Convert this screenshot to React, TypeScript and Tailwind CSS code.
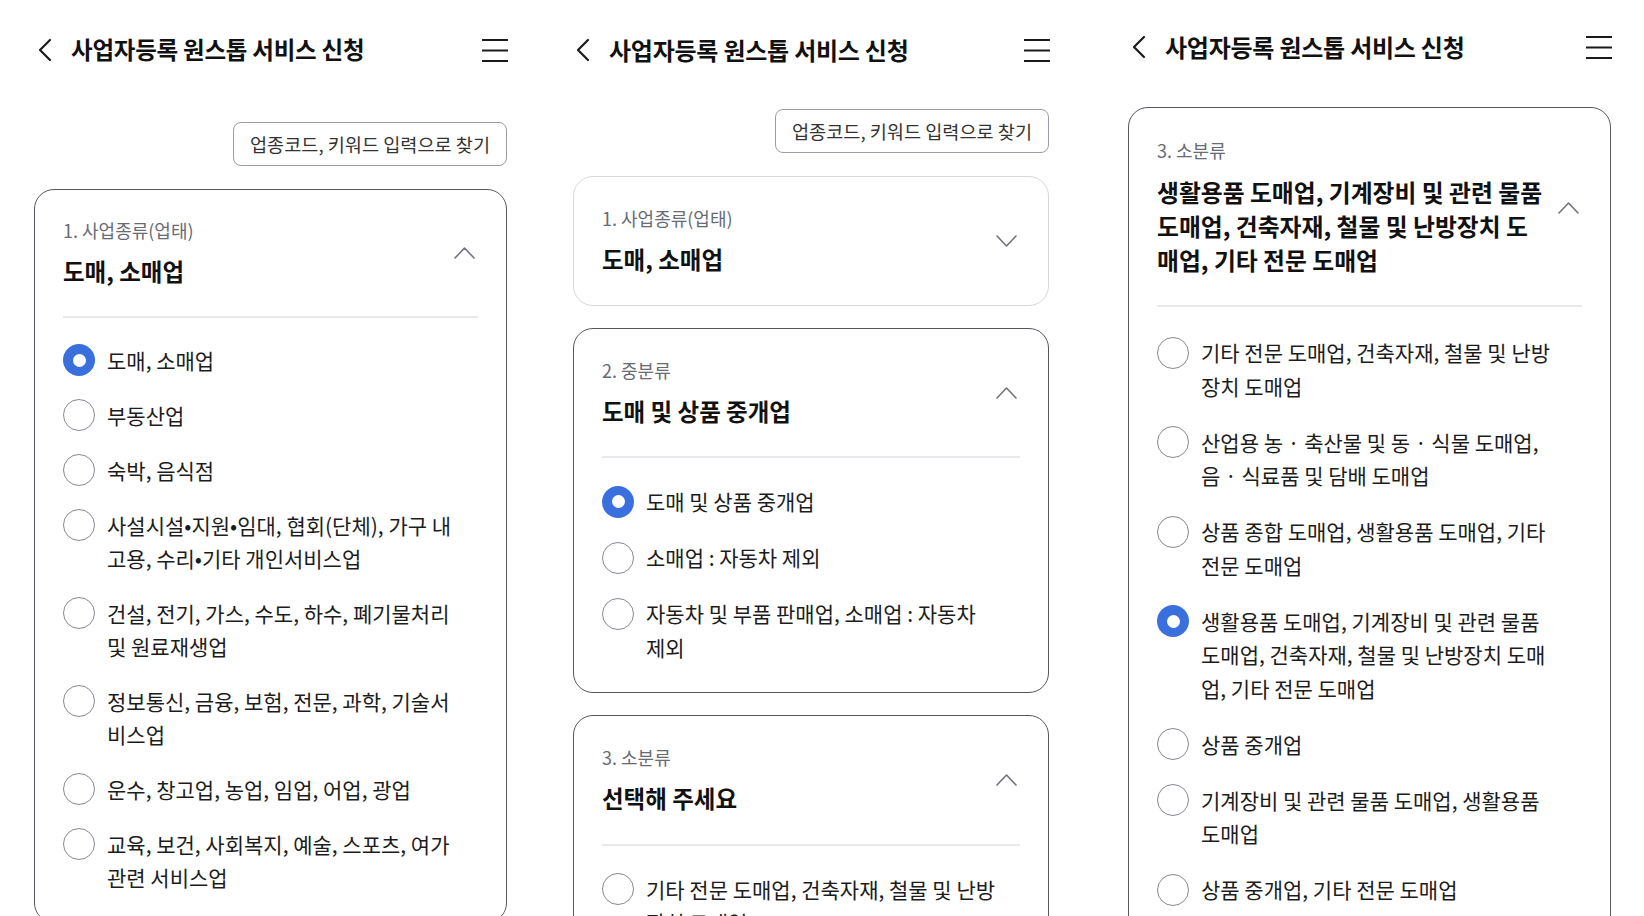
type Option = { lines: string[]; selected?: boolean }

type Variant = 'a' | 'b' | 'c'

interface CardProps {
  label: string
  title: string[]
  open?: boolean
  options?: Option[]
  variant?: Variant
}

// the three captures were taken at slightly different zoom levels
const spacing: Record<Variant, { box: string; title: string; rule: string; list: string; line: string }> = {
  a: {
    box: 'pt-[28px] pb-[28px]',
    title: 'text-[23.5px] leading-[33.5px]',
    rule: 'mt-[27px]',
    list: 'mt-[26px] gap-[22px]',
    line: 'leading-[33px]',
  },
  b: {
    box: 'pt-[29px] pb-[28px]',
    title: 'text-[23.5px] leading-[33.5px]',
    rule: 'mt-[28px]',
    list: 'mt-[27px] gap-[22.5px]',
    line: 'leading-[33.5px]',
  },
  c: {
    box: 'pt-[30px] pb-[30px]',
    title: 'text-[23.8px] leading-[34px]',
    rule: 'mt-[28px]',
    list: 'mt-[29px] gap-[22.5px]',
    line: 'leading-[33.5px]',
  },
}

function BackIcon() {
  return (
    <svg width="16" height="24" viewBox="0 0 16 24" fill="none">
      <path d="M13 2L3 12l10 10" stroke="#1a1a1a" strokeWidth="2.2" strokeLinecap="round" strokeLinejoin="round" />
    </svg>
  )
}

function MenuIcon() {
  return (
    <svg width="26" height="24" viewBox="0 0 26 24" fill="none">
      <path d="M0 2h26M0 12.5h26M0 23h26" stroke="#1a1a1a" strokeWidth="2" />
    </svg>
  )
}

function Chevron({ up }: { up: boolean }) {
  return (
    <svg width="21" height="12" viewBox="0 0 21 12" fill="none">
      <path
        d={up ? 'M1 11l9.5-10L20 11' : 'M1 1l9.5 10L20 1'}
        stroke="#6f737b"
        strokeWidth="1.6"
        strokeLinecap="round"
        strokeLinejoin="round"
      />
    </svg>
  )
}

function Header({ large }: { large?: boolean }) {
  return (
    <div className="flex h-[40px] items-center justify-between">
      <div className="flex items-center gap-[18px]">
        <BackIcon />
        <h1
          className={`font-bold tracking-[-0.01em] text-[#111] ${large ? 'text-[24px]' : 'text-[23.5px]'}`}
        >
          사업자등록 원스톱 서비스 신청
        </h1>
      </div>
      <MenuIcon />
    </div>
  )
}

function SearchButton() {
  return (
    <button className="flex h-[44px] items-center self-end rounded-[8px] border-[1.5px] border-[#9a9ea6] px-[16px] text-[18.6px] text-[#333]">
      업종코드, 키워드 입력으로 찾기
    </button>
  )
}

function Radio({ selected }: { selected?: boolean }) {
  if (selected) {
    return (
      <div className="flex h-[32px] w-[32px] items-center justify-center rounded-full bg-[#3a70de]">
        <div className="h-[13px] w-[13px] rounded-full bg-white" />
      </div>
    )
  }
  return <div className="h-[32px] w-[32px] rounded-full border-[1.6px] border-[#868a92]" />
}

function Card({ label, title, open = true, options = [], variant = 'a' }: CardProps) {
  const s = spacing[variant]
  return (
    <div
      className={`shrink-0 rounded-[20px] border-[1.5px] px-[28px] ${s.box} ${
        open ? 'border-[#53575e]' : 'border-[#d6d8dd]'
      }`}
    >
      <div className="flex items-center justify-between">
        <div className="min-w-0 flex-1">
          <div className="text-[18px] leading-[24px] text-[#676b74]">{label}</div>
          <div className={`mt-[13px] font-bold text-[#111] ${s.title}`}>
            {title.map((t) => (
              <div key={t} className="whitespace-nowrap">{t}</div>
            ))}
          </div>
        </div>
        <div className="mr-[3px] shrink-0">
          <Chevron up={open} />
        </div>
      </div>

      {open && (
        <>
          <div className={`h-[2px] bg-[#e8e9ed] ${s.rule}`} />
          <div className={`flex flex-col ${s.list}`}>
            {options.map((o) => (
              <div key={o.lines.join('')} className="flex items-start gap-[12px]">
                <div className={`flex shrink-0 items-center ${s.line}`}>
                  <span className="invisible w-0">.</span>
                  <Radio selected={o.selected} />
                </div>
                <div className={`text-[21px] text-[#1c1c1c] ${s.line}`}>
                  {o.lines.map((l) => (
                    <div key={l} className="whitespace-nowrap">{l}</div>
                  ))}
                </div>
              </div>
            ))}
          </div>
        </>
      )}
    </div>
  )
}

const bizTypes: Option[] = [
  { lines: ['도매, 소매업'], selected: true },
  { lines: ['부동산업'] },
  { lines: ['숙박, 음식점'] },
  { lines: ['사설시설•지원•임대, 협회(단체), 가구 내', '고용, 수리•기타 개인서비스업'] },
  { lines: ['건설, 전기, 가스, 수도, 하수, 폐기물처리', '및 원료재생업'] },
  { lines: ['정보통신, 금융, 보험, 전문, 과학, 기술서', '비스업'] },
  { lines: ['운수, 창고업, 농업, 임업, 어업, 광업'] },
  { lines: ['교육, 보건, 사회복지, 예술, 스포츠, 여가', '관련 서비스업'] },
]

const midTypes: Option[] = [
  { lines: ['도매 및 상품 중개업'], selected: true },
  { lines: ['소매업 : 자동차 제외'] },
  { lines: ['자동차 및 부품 판매업, 소매업 : 자동차', '제외'] },
]

const subTypes: Option[] = [
  { lines: ['기타 전문 도매업, 건축자재, 철물 및 난방', '장치 도매업'] },
  { lines: ['산업용 농 · 축산물 및 동 · 식물 도매업,', '음 · 식료품 및 담배 도매업'] },
  { lines: ['상품 종합 도매업, 생활용품 도매업, 기타', '전문 도매업'] },
  {
    lines: ['생활용품 도매업, 기계장비 및 관련 물품', '도매업, 건축자재, 철물 및 난방장치 도매', '업, 기타 전문 도매업'],
    selected: true,
  },
  { lines: ['상품 중개업'] },
  { lines: ['기계장비 및 관련 물품 도매업, 생활용품', '도매업'] },
  { lines: ['상품 중개업, 기타 전문 도매업'] },
]

export default function App() {
  return (
    <div className="flex h-[916px] w-[1644px] overflow-hidden bg-white font-['Noto_Sans_CJK_KR','Noto_Sans',sans-serif]">
      {/* Screen 1: business type */}
      <div className="flex h-full w-[548px] shrink-0 flex-col overflow-hidden pl-[34px] pr-[41px]">
        <div className="ml-[3px] mr-[-1px] pt-[30px]">
          <Header />
        </div>
        <div className="mt-[52px] flex flex-col">
          <SearchButton />
        </div>
        <div className="mt-[23px] flex flex-col">
          <Card label="1. 사업종류(업태)" title={['도매, 소매업']} options={bizTypes} />
        </div>
      </div>

      {/* Screen 2: middle category */}
      <div className="flex h-full w-[548px] shrink-0 flex-col overflow-hidden pl-[25px] pr-[47px]">
        <div className="ml-[2px] mr-[-1px] pt-[30px]">
          <Header large />
        </div>
        <div className="mt-[39px] flex flex-col">
          <SearchButton />
        </div>
        <div className="mt-[23px] flex flex-col gap-[22px]">
          <Card label="1. 사업종류(업태)" title={['도매, 소매업']} open={false} variant="b" />
          <Card label="2. 중분류" title={['도매 및 상품 중개업']} options={midTypes} variant="b" />
          <Card label="3. 소분류" title={['선택해 주세요']} options={subTypes.slice(0, 2)} variant="b" />
        </div>
      </div>

      {/* Screen 3: sub category */}
      <div className="flex h-full w-[548px] shrink-0 flex-col overflow-hidden pl-[32px] pr-[33px]">
        <div className="ml-[3px] mr-[-1px] pt-[27px]">
          <Header large />
        </div>
        <div className="mt-[40px] flex flex-col">
          <Card
            label="3. 소분류"
            title={['생활용품 도매업, 기계장비 및 관련 물품', '도매업, 건축자재, 철물 및 난방장치 도', '매업, 기타 전문 도매업']}
            options={subTypes}
            variant="c"
          />
        </div>
      </div>
    </div>
  )
}
